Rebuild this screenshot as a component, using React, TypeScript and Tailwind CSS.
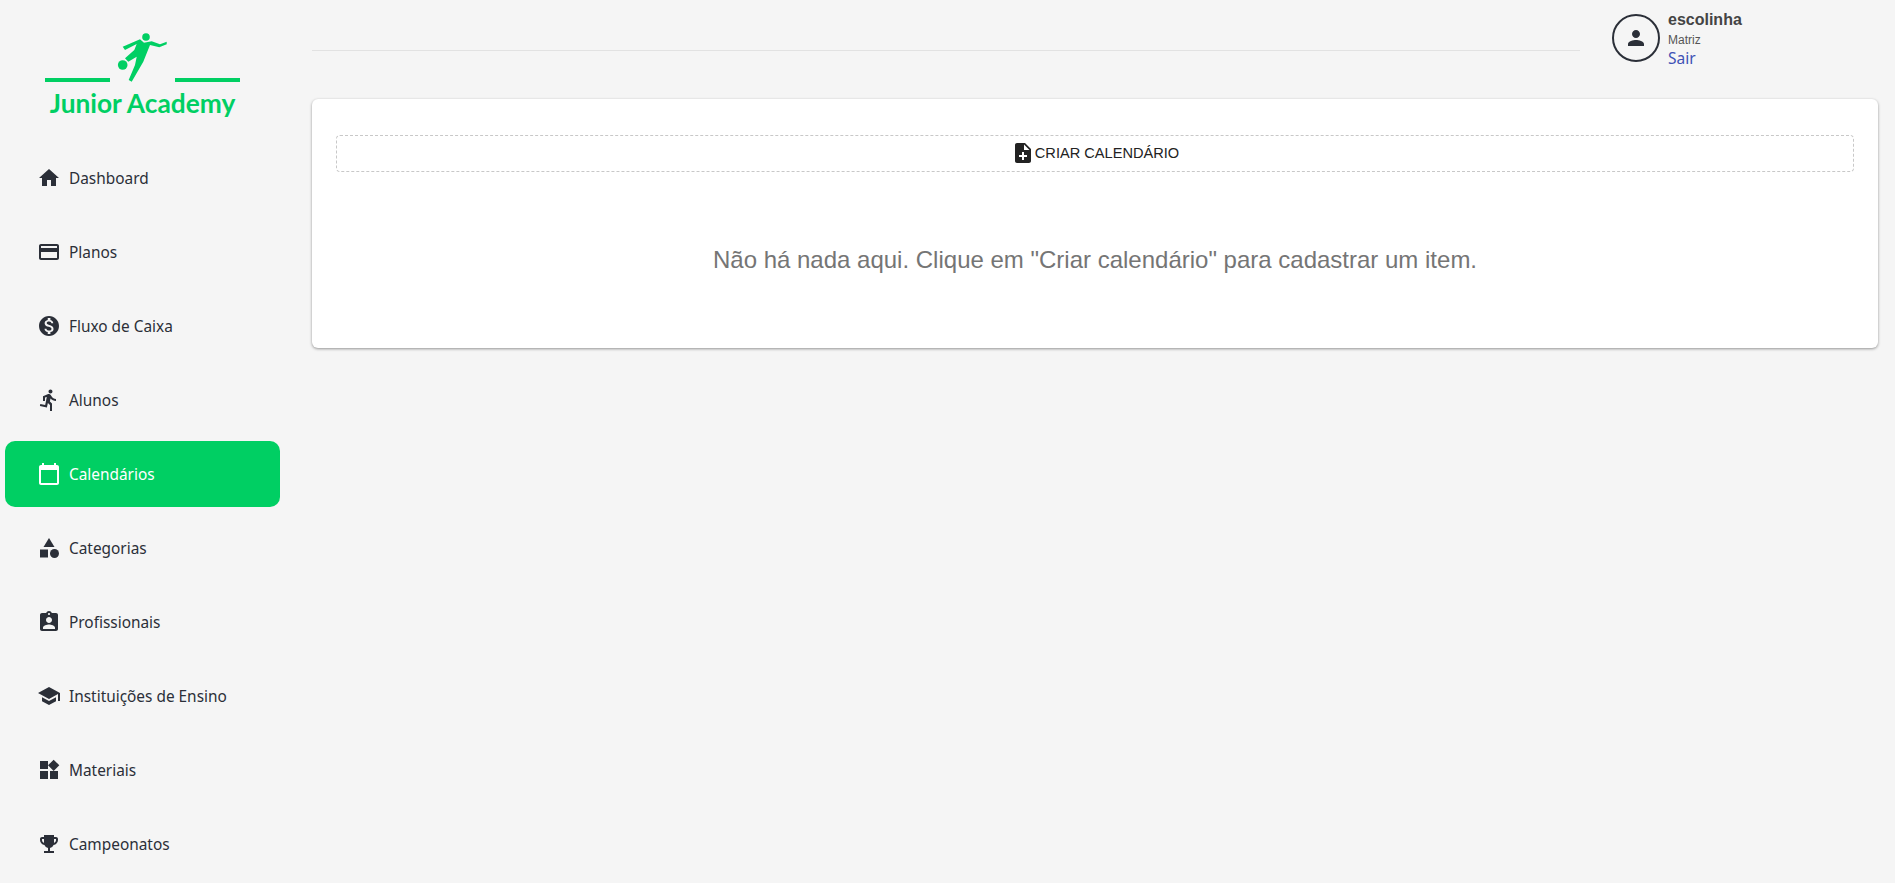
import { ReactNode } from 'react';
import {
  MdAssignmentInd,
  MdCalendarToday,
  MdCategory,
  MdCreditCard,
  MdDirectionsRun,
  MdEmojiEvents,
  MdHome,
  MdMonetizationOn,
  MdNoteAdd,
  MdPerson,
  MdSchool,
  MdWidgets,
} from 'react-icons/md';

const navItems: { label: string; icon: ReactNode; active?: boolean }[] = [
  { label: 'Dashboard', icon: <MdHome size={24} /> },
  { label: 'Planos', icon: <MdCreditCard size={24} /> },
  { label: 'Fluxo de Caixa', icon: <MdMonetizationOn size={24} /> },
  { label: 'Alunos', icon: <MdDirectionsRun size={24} /> },
  { label: 'Calendários', icon: <MdCalendarToday size={24} />, active: true },
  { label: 'Categorias', icon: <MdCategory size={24} /> },
  { label: 'Profissionais', icon: <MdAssignmentInd size={24} /> },
  { label: 'Instituições de Ensino', icon: <MdSchool size={24} /> },
  { label: 'Materiais', icon: <MdWidgets size={24} /> },
  { label: 'Campeonatos', icon: <MdEmojiEvents size={24} /> },
];

function Logo() {
  return (
    <div className="flex flex-col items-center pt-[30px] h-[145px]">
      <div className="flex items-end h-[52px]">
        <div className="w-[65px] h-1 bg-[#00cf63]" />
        <svg viewBox="0 0 60 60" className="w-[60px] h-[60px] -mb-2 ml-0.5 mr-[3px] text-[#00cf63]" fill="currentColor">
          <circle cx="34" cy="7" r="3.8" />
          <circle cx="10.7" cy="35" r="4.8" />
          <path d="M10.7 16.7 28 9.3 32 12.7 39.7 11.3 48 14.3 54.7 11.7 54.7 14.3 47.3 17.3 38 15 31.3 31.7 19.7 51.7 16.7 50 23 35 24.7 26.7 16.3 31.7 13 28.3 22.3 20 24.7 14 13 20Z" />
        </svg>
        <div className="w-[65px] h-1 bg-[#00cf63]" />
      </div>
      <span className="mt-[6px] text-[26.3px] leading-[30px] font-bold text-[#00cf63] font-['Lato',sans-serif]">
        Junior Academy
      </span>
    </div>
  );
}

export default function App() {
  return (
    <div className="flex h-[883px] overflow-hidden bg-[#f5f5f5] font-['Liberation_Sans',sans-serif]">
      {/* Sidebar */}
      <aside className="w-[285px] shrink-0 px-[5px]">
        <Logo />
        <nav className="flex flex-col gap-2">
          {navItems.map((item) => (
            <a
              key={item.label}
              href="#"
              className={`flex items-center gap-2 h-[66px] shrink-0 pl-8 rounded-[10px] text-[15.4px] font-['Noto_Sans',sans-serif] ${
                item.active ? 'bg-[#00cf63] text-white' : 'text-[#2b2f38]'
              }`}
            >
              {item.icon}
              <span className="mt-px">{item.label}</span>
            </a>
          ))}
        </nav>
      </aside>

      {/* Main */}
      <main className="flex-1 pl-[27px] pr-[17px]">
        <header className="flex items-start h-[99px]">
          <div className="flex-1 mt-[50px] border-b border-[#e2e2e2]" />
          <div className="flex items-start gap-2 ml-8 w-[266px] mt-[11px]">
            <div className="mt-[3px] flex items-center justify-center w-12 h-12 rounded-full border-2 border-[#2b2f38] text-[#2b2f38]">
              <MdPerson size={24} />
            </div>
            <div className="flex flex-col">
              <span className="text-base leading-[18px] font-bold text-[#444]">escolinha</span>
              <span className="mt-1 text-xs leading-[14px] text-[#555]">Matriz</span>
              <a href="#" className="mt-px text-[15.5px] leading-[20px] text-[#3f51b5] font-['Noto_Sans',sans-serif]">
                Sair
              </a>
            </div>
          </div>
        </header>

        <section className="h-[249px] px-6 pt-9 bg-white rounded-md shadow-[0_1px_3px_rgba(0,0,0,0.4)]">
          <button className="flex items-center justify-center w-full h-[37px] rounded border border-dashed border-[#c8c8c8] text-[14.6px] text-[#222]">
            <MdNoteAdd size={24} className="-mr-0.5 -mt-px" />
            <span className="ml-0.5">CRIAR CALENDÁRIO</span>
          </button>
          <p className="mt-[74px] text-center text-2xl leading-7 text-[#757575]">
            Não há nada aqui. Clique em "Criar calendário" para cadastrar um item.
          </p>
        </section>
      </main>
    </div>
  );
}
